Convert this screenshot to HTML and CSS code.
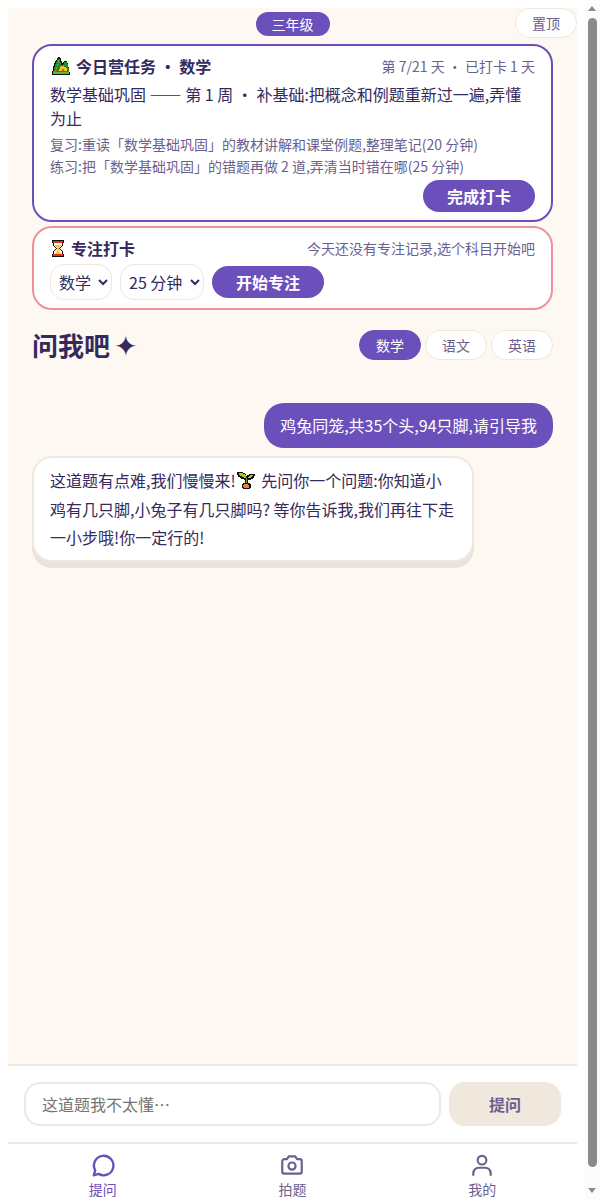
FILE: index.html
```html
<!DOCTYPE html>
<html lang="zh-CN">
<head>
  <meta charset="UTF-8">
  <meta name="viewport" content="width=device-width, initial-scale=1.0">
  <title>问我吧</title>
  <link rel="stylesheet" href="styles.css">
</head>
<body>
  <div class="app">
    <main class="main">
      <button class="pin-btn">置顶</button>
      <div class="grade-row"><span class="grade-pill">三年级</span></div>

      <!-- 今日任务 -->
      <section class="card card-task">
        <div class="card-head">
          <div class="card-title">
            <svg class="pixel-icon" width="18" height="18" viewBox="0 0 18 18" shape-rendering="crispEdges">
              <path d="M6 0h2v1h1v3h1v2h1V5h1V4h3v2h1v4h1v5h1v3H0v-4h1V9h1V6h1V4h1V3h1V1h1z" fill="#111"/>
              <path d="M6 2h2v3h1v3h2V7h1V5h3v2h1v4h1v5H1v-2h1v-4h1V7h1V5h1V3h1z" fill="#2a8a2a"/>
              <path d="M6 3h1v3H6zM5 7h1v2H5zM4 10h1v2H4z" fill="#55b838"/>
              <path d="M9 9h3v1h2v1h1v3H7v-2h1v-2h1z" fill="#f7c21c"/>
              <path d="M10 12h2v2h-2zM3 13h2v1H3zM2 14h2v1H2z" fill="#e8541e"/>
              <path d="M1 15h16v2H1z" fill="#63b82a"/>
            </svg>
            今日营任务 · 数学
          </div>
          <div class="card-meta">第 7/21 天 · 已打卡 1 天</div>
        </div>
        <p class="task-main">数学基础巩固 —— 第 1 周 · 补基础:把概念和例题重新过一遍,弄懂为止</p>
        <p class="task-sub">复习:重读「数学基础巩固」的教材讲解和课堂例题,整理笔记(20 分钟)</p>
        <p class="task-sub">练习:把「数学基础巩固」的错题再做 2 道,弄清当时错在哪(25 分钟)</p>
        <div class="btn-row"><button class="btn">完成打卡</button></div>
      </section>

      <!-- 专注打卡 -->
      <section class="card card-focus">
        <div class="card-head">
          <div class="card-title focus-title">
            <svg class="pixel-icon" width="12" height="17" viewBox="0 0 12 17" shape-rendering="crispEdges">
              <path d="M0 0h12v3h-1v3h-1v1H9v1H8v1h1v1h1v1h1v3h1v3H0v-3h1v-3h1v-1h1V9h1V8H3V7H2V6H1V3H0z" fill="#111"/>
              <path d="M1 1h10v2H1zM1 14h10v2H1z" fill="#d9361f"/>
              <path d="M2 3h8v3H9v1H8v1H7v1h1v1h1v1h1v3H2v-3h1v-1h1V9h1V8H4V7H3V6H2z" fill="#fff4d0"/>
              <path d="M3 5h6v1H8v1H7v1H5V7H4V6H3zM5 8h2v4h1v1h1v1H3v-1h1v-1h1z" fill="#fbc23a"/>
            </svg>
            专注打卡
          </div>
          <div class="card-meta">今天还没有专注记录,选个科目开始吧</div>
        </div>
        <div class="focus-controls">
          <select class="select select-subject">
            <option>数学</option>
            <option>语文</option>
            <option>英语</option>
          </select>
          <select class="select select-time">
            <option>25 分钟</option>
            <option>45 分钟</option>
          </select>
          <button class="btn btn-wide">开始专注</button>
        </div>
      </section>

      <div class="ask-head">
        <h1 class="ask-title">问我吧 <span class="sparkle">✦</span></h1>
        <div class="chips">
          <button class="chip active">数学</button>
          <button class="chip">语文</button>
          <button class="chip">英语</button>
        </div>
      </div>

      <div class="messages">
        <div class="bubble bubble-user">鸡兔同笼,共35个头,94只脚,请引导我</div>
        <div class="bubble bubble-bot">这道题有点难,我们慢慢来!<svg class="pixel-icon sprout" width="18" height="18" viewBox="0 0 18 18" shape-rendering="crispEdges">
            <path d="M0 0h6v1h2v1h1v2h1V3h2V2h6v2h-1v2h-1v1h-2v1h-3v3h2v1h1v4h-1v1H6v-1H5v-4h1v-1h2V8H7V7H4V6H3V5H1V3H0z" fill="#111"/>
            <path d="M2 1h4v1h2v1h1v3H7V5H5V4H3V3H2zM11 5h1V4h1V3h3v1h-1v1h-1v1h-3z" fill="#a8c81e"/>
            <path d="M9 6h1v5H9z" fill="#7f9f1a"/>
            <path d="M7 12h4v1h1v3H7v-1H6v-2h1z" fill="#ee7f3b"/>
          </svg> 先问你一个问题:你知道小鸡有几只脚,小兔子有几只脚吗? 等你告诉我,我们再往下走一小步哦!你一定行的!</div>
      </div>
    </main>

    <form class="composer" onsubmit="return false">
      <input class="composer-input" type="text" placeholder="这道题我不太懂…">
      <button class="send-btn">提问</button>
    </form>

    <nav class="tabbar">
      <a href="#" class="tab active">
        <svg width="26" height="26" viewBox="0 0 24 24" fill="none" stroke="currentColor" stroke-width="2.2" stroke-linejoin="round"><path d="M3.5 21.5l1.3-4.6A9 9 0 1 1 8 20.2z"/></svg>
        <span>提问</span>
      </a>
      <a href="#" class="tab">
        <svg width="26" height="26" viewBox="0 0 24 24" fill="none" stroke="currentColor" stroke-width="2" stroke-linejoin="round"><path d="M3 8.5a2 2 0 0 1 2-2h2.500L9 4h6l1.500 2.500H19a2 2 0 0 1 2 2V18a2 2 0 0 1-2 2H5a2 2 0 0 1-2-2z"/><circle cx="12" cy="13" r="3.300"/></svg>
        <span>拍题</span>
      </a>
      <a href="#" class="tab">
        <svg width="26" height="26" viewBox="0 0 24 24" fill="none" stroke="currentColor" stroke-width="2"><circle cx="12" cy="7.500" r="4"/><path d="M4 22v-2.500a5 5 0 0 1 5-5h6a5 5 0 0 1 5 5V22"/></svg>
        <span>我的</span>
      </a>
    </nav>
  </div>

  <!-- 页面滚动条 -->
  <div class="scrollbar" aria-hidden="true">
    <span class="scroll-arrow scroll-up"></span>
    <span class="scroll-thumb"></span>
    <span class="scroll-arrow scroll-down"></span>
  </div>
</body>
</html>
```

FILE: styles.css
```css
* {
  box-sizing: border-box;
}

html {
  overflow: hidden;
}

body {
  margin: 8px 23px 8px 8px;
  background-color: #fff;
  color: #352a5e;
  font-family: "Noto Sans CJK SC", "Noto Sans", sans-serif;
  font-size: 16px;
}

button, select, input {
  font-family: inherit;
}

.app {
  display: flex;
  flex-direction: column;
  height: 100vh;
  background-color: #fff;
}

.main {
  position: relative;
  flex: 1;
  min-height: 0;
  padding: 0 24px;
  background-color: #fdf8f1;
}

.pin-btn {
  position: absolute;
  top: 0;
  right: 0;
  width: 62px;
  height: 30px;
  padding: 0;
  background: #fff;
  border: 1px solid #f0e8dc;
  border-radius: 15px;
  color: #6b5f8f;
  font-size: 14px;
}

.grade-row {
  display: flex;
  justify-content: center;
  padding-top: 4px;
}

.grade-pill {
  width: 74px;
  height: 24px;
  line-height: 24px;
  text-align: center;
  border-radius: 12px;
  background-color: #6b4fbb;
  color: #fff;
  font-size: 14px;
}

.card {
  background: #fff;
  border: 2px solid #6b4fbb;
  border-radius: 20px;
  padding: 7px 16px;
}

.card-task {
  margin-top: 8px;
  height: 178px;
}

.card-focus {
  margin-top: 4px;
  height: 84px;
  border-color: #f08f9d;
}

.card-head {
  display: flex;
  justify-content: space-between;
  align-items: center;
  height: 26px;
}

.card-title {
  display: flex;
  align-items: center;
  gap: 6px;
  font-weight: 700;
}

.card-title .pixel-icon {
  margin-left: 2px;
}

.focus-title {
  gap: 7px;
  font-size: 16px;
}

.card-meta {
  color: #6b5f8f;
  font-size: 14px;
}

.pixel-icon {
  flex: none;
}

.task-main {
  margin: 3px 0 0;
  line-height: 24px;
}

.task-sub {
  margin: 0;
  color: #6b5f8f;
  font-size: 14px;
  line-height: 22px;
}

.task-main + .task-sub {
  margin-top: 3px;
}

.btn-row {
  display: flex;
  justify-content: flex-end;
  margin-top: 3px;
}

.btn {
  width: 112px;
  height: 32px;
  padding: 0;
  border: none;
  border-radius: 16px;
  background-color: #6b4fbb;
  color: #fff;
  font-size: 16px;
  font-weight: 700;
}

.focus-controls {
  display: flex;
  align-items: center;
  gap: 8px;
  margin-top: 3px;
}

.select {
  height: 36px;
  padding: 0 4px;
  background: #fff;
  border: 1px solid #f0e8dc;
  border-radius: 14px;
  color: #352a5e;
  font-size: 16px;
}

.select-subject {
  width: 62px;
}

.select-time {
  width: 84px;
}

.ask-head {
  display: flex;
  justify-content: space-between;
  align-items: flex-start;
  margin-top: 20px;
  height: 34px;
}

.ask-title {
  margin: 0;
  font-size: 26px;
  line-height: 30px;
  font-weight: 700;
}

.sparkle {
  margin-left: -2px;
  font-family: "DejaVu Sans", sans-serif;
  font-size: 28px;
  line-height: 30px;
  font-weight: 400;
}

.chips {
  display: flex;
  gap: 4px;
}

.chip {
  width: 62px;
  height: 30px;
  padding: 0;
  background: #fff;
  border: 1px solid #f0e8dc;
  border-radius: 15px;
  color: #6b5f8f;
  font-size: 14px;
}

.chip.active {
  background-color: #6b4fbb;
  border-color: #6b4fbb;
  color: #fff;
}

.messages {
  display: flex;
  flex-direction: column;
  gap: 8px;
  margin-top: 39px;
}

.bubble {
  padding: 8px 16px;
  line-height: 1.8;
  border-radius: 20px;
}

.bubble-user {
  align-self: flex-end;
  background-color: #6b4fbb;
  color: #fff;
}

.bubble-bot {
  align-self: flex-start;
  width: 442px;
  background: #fff;
  border: 2px solid #f0e8dc;
  box-shadow: 0 6px 0 #e8e3dc;
}

.sprout {
  margin: 0 3px 0 1px;
  vertical-align: -3px;
}

.composer {
  display: flex;
  gap: 8px;
  height: 78px;
  padding: 16px;
  background: #fff;
  border-top: 2px solid #f0e8dc;
}

.composer-input {
  flex: 1;
  min-width: 0;
  padding: 0 16px;
  border: 2px solid #f0e8dc;
  border-radius: 16px;
  color: #352a5e;
  font-size: 16px;
  outline: none;
}

.send-btn {
  width: 112px;
  border: none;
  border-radius: 16px;
  background-color: #f0e8dc;
  color: #6b5f8f;
  font-size: 16px;
  font-weight: 700;
}

.tabbar {
  display: grid;
  grid-template-columns: repeat(3, 1fr);
  height: 66px;
  border-top: 2px solid #f0e8dc;
}

.tab {
  display: flex;
  flex-direction: column;
  align-items: center;
  padding-top: 8px;
  color: #6b5f8f;
  font-size: 14px;
  line-height: 20px;
  text-decoration: none;
}

.tab span {
  margin-top: 1px;
}

.tab.active {
  color: #6b4fbb;
}

/* 滚动条 */
.scrollbar {
  position: fixed;
  top: 0;
  right: 0;
  bottom: 0;
  width: 15px;
  background-color: #fcfcfc;
}

.scroll-thumb {
  position: absolute;
  top: 18px;
  bottom: 33px;
  left: 3px;
  width: 9px;
  border-radius: 5px;
  background-color: #8b8b8b;
}

.scroll-arrow {
  position: absolute;
  left: 3px;
  border-left: 4.5px solid transparent;
  border-right: 4.5px solid transparent;
}

.scroll-up {
  top: 6px;
  border-bottom: 5px solid #8b8b8b;
}

.scroll-down {
  bottom: 7px;
  border-top: 5px solid #8b8b8b;
}
```
